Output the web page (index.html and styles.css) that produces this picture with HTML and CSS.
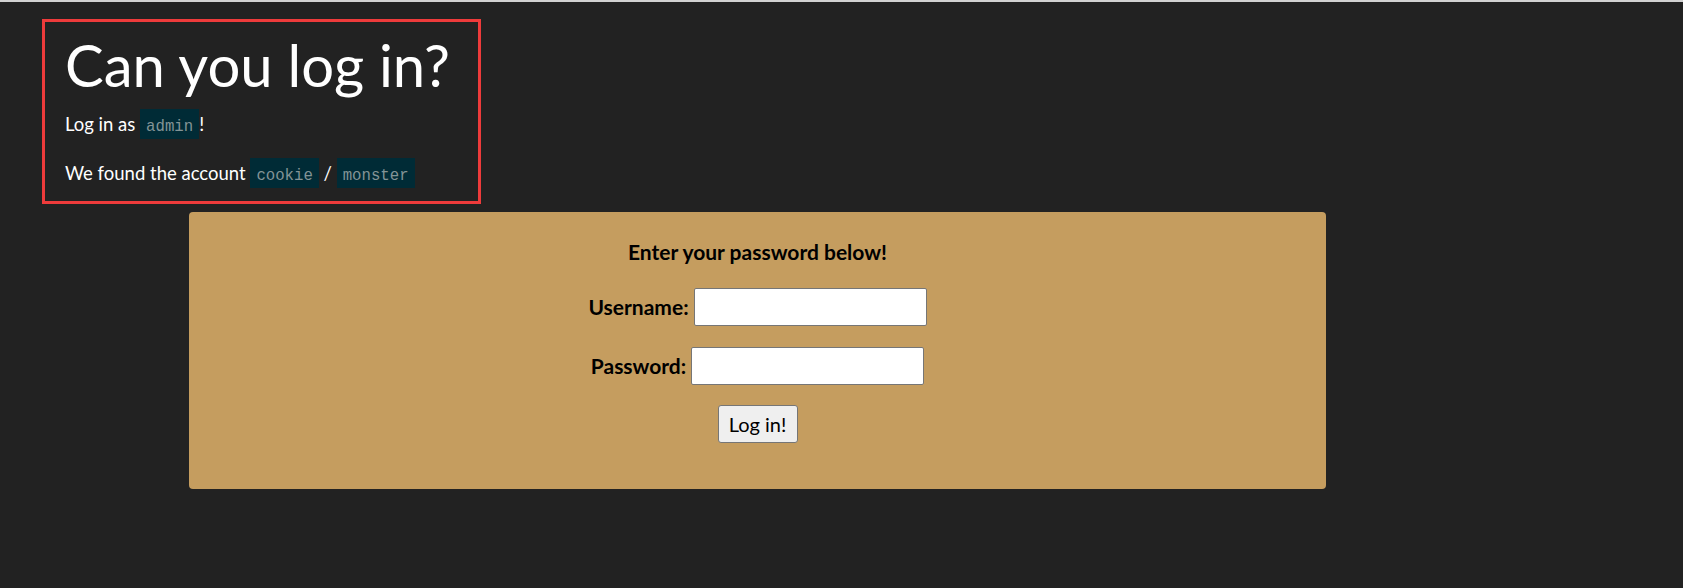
FILE: index.html
```html
<!DOCTYPE html>
<html lang="en">
<head>
  <meta charset="UTF-8" />
  <meta name="viewport" content="width=device-width, initial-scale=1.0"/>
  <title>Can you log in?</title>
  <link rel="stylesheet" href="styles.css">
</head>
<body>
  <div class="top-line"></div>
  <main class="page">
    <div class="intro">
      <h1>Can you log in?</h1>
      <p>Log in as <code>admin</code>!</p>
      <p>We found the account <code>cookie</code> / <code>monster</code></p>
    </div>

    <form class="login-panel">
      <p class="prompt">Enter your password below!</p>
      <div class="field">
        <label for="username">Username:</label>
        <input type="text" id="username" name="username">
      </div>
      <div class="field">
        <label for="password">Password:</label>
        <input type="password" id="password" name="password">
      </div>
      <button type="submit">Log in!</button>
    </form>
  </main>
</body>
</html>
```

FILE: styles.css
```css
* { box-sizing: border-box; }
body {
  margin: 0;
  background: #222;
  color: #fff;
  font-family: Lato, "Noto Sans", sans-serif;
  font-size: 18.5px;
  min-height: 100vh;
}
.top-line {
  height: 2px;
  background: #d2d2d2;
}
.page {
  display: flex;
  flex-direction: column;
  align-items: flex-start;
  padding: 17px 0 0 42px;
}
.intro {
  border: 3px solid #ee3b3b;
  padding: 0 28px 13px 20px;
}
.intro h1 {
  margin: 8px 0 10px;
  font-size: 58px;
  font-weight: normal;
}
.intro p {
  margin: 0 0 19px;
  line-height: 30px;
}
.intro p:last-child { margin-bottom: 0; }
code {
  display: inline-block;
  padding: 8px 6px 2px;
  line-height: 20px;
  font-family: "Liberation Mono", "DejaVu Sans Mono", monospace;
  font-size: 15.7px;
  background: #002b36;
  color: #839496;
}
.login-panel {
  display: flex;
  flex-direction: column;
  align-items: center;
  width: 1137px;
  margin: 8px 0 0 147px;
  padding: 27px 0 46px;
  background: #c59d5f;
  border-radius: 4px;
  color: #000;
  font-size: 21px;
}
.prompt {
  margin: 0 0 23.5px;
  font-weight: bold;
}
.field {
  display: flex;
  align-items: center;
  gap: 5px;
  margin-bottom: 21px;
}
.field + .field { margin-bottom: 20px; }
.field label {
  font-weight: bold;
}
.field input {
  width: 233px;
  height: 38px;
  border: 1px solid #767676;
  border-radius: 2px;
  background: #fff;
  font-size: 16px;
}
.login-panel button {
  width: 80px;
  height: 38px;
  padding: 0;
  font-family: inherit;
  font-size: 20px;
  color: #000;
  background: #efefef;
  border: 1px solid #767676;
  border-radius: 3px;
}
```
